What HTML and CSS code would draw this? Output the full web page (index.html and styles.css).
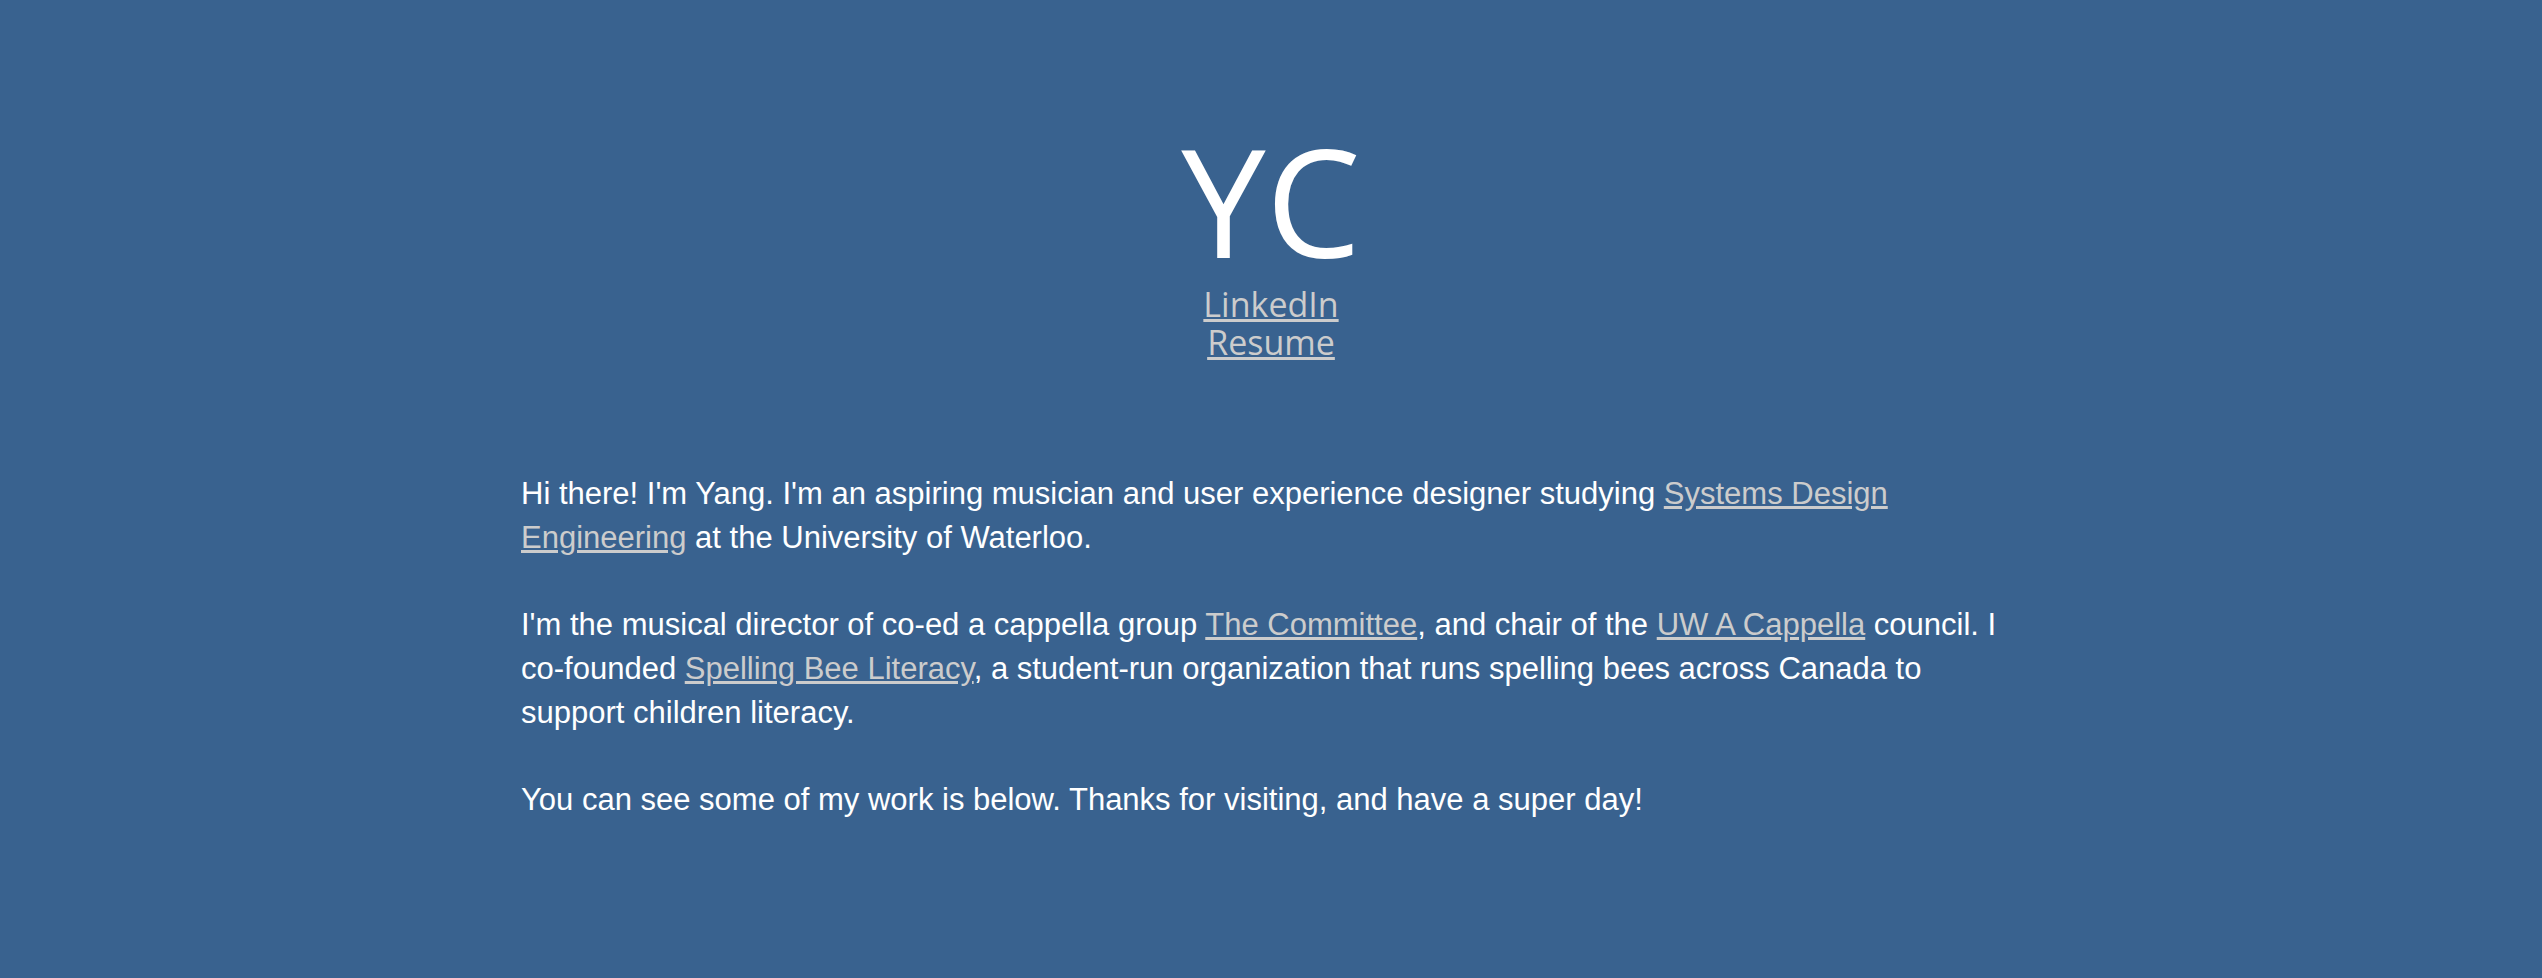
FILE: index.html
```html
<!DOCTYPE html>
<html lang="en">
<head>
<meta charset="utf-8">
<title>YC</title>
<link rel="stylesheet" href="styles.css">
</head>
<body>
  <header class="hero">
    <h1 class="hero-title">YC</h1>
    <nav class="hero-links">
      <a href="#">LinkedIn</a>
      <a href="#">Resume</a>
    </nav>
  </header>
  <main class="intro">
    <p>Hi there! I'm Yang. I'm an aspiring musician and user experience designer studying <a href="#">Systems Design Engineering</a> at the University of Waterloo.</p>
    <p>I'm the musical director of co-ed a cappella group <a href="#">The Committee</a>, and chair of the <a href="#">UW A Cappella</a> council. I co-founded <a href="#">Spelling Bee Literacy</a>, a student-run organization that runs spelling bees across Canada to support children literacy.</p>
    <p>You can see some of my work is below. Thanks for visiting, and have a super day!</p>
  </main>
</body>
</html>
```
FILE: styles.css
```css
html, body {
  margin: 0;
  padding: 0;
}
body {
  background: #39628f;
  color: #ffffff;
  min-height: 100vh;
}
.hero {
  display: flex;
  flex-direction: column;
  align-items: center;
  padding-top: 124px;
  font-family: "Open Sans", "Noto Sans", sans-serif;
}
.hero-title {
  margin: 0;
  font-size: 151px;
  line-height: 151px;
  font-weight: 400;
  color: #ffffff;
}
.hero-links {
  display: flex;
  flex-direction: column;
  align-items: center;
  margin-top: 10px;
  font-size: 34px;
  line-height: 38px;
}
.hero-links a,
.intro a {
  color: #cccccc;
  text-decoration: underline;
}
.intro {
  width: 1500px;
  margin: 111px auto 0;
  font-family: "Liberation Sans", Arial, sans-serif;
  font-size: 31px;
  line-height: 44px;
}
.intro p {
  margin: 0 0 43px;
}
```
